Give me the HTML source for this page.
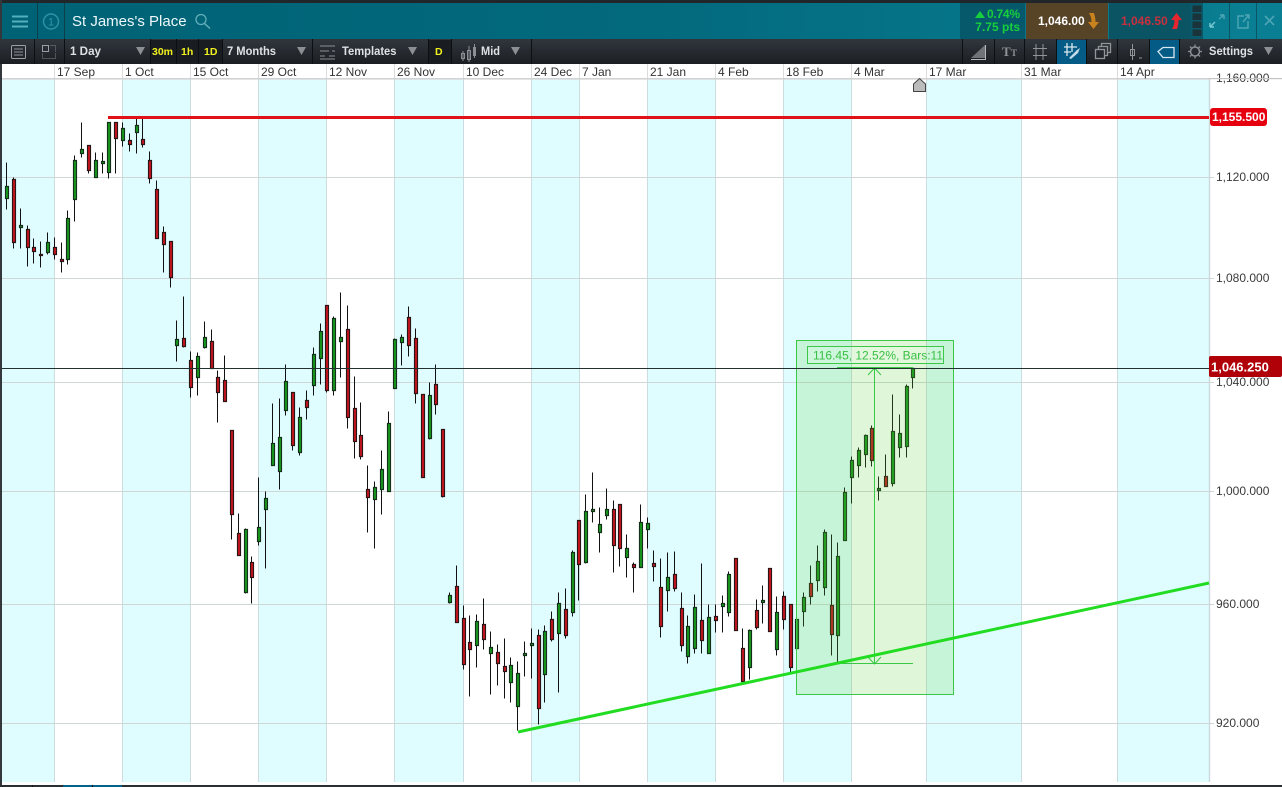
<!DOCTYPE html>
<html><head><meta charset="utf-8"><title>St James's Place</title>
<style>
html,body{margin:0;padding:0;background:#fff;width:1282px;height:787px;overflow:hidden}
svg{display:block;font-family:"Liberation Sans",sans-serif}
</style></head><body>
<svg width="1282" height="787" viewBox="0 0 1282 787" xmlns="http://www.w3.org/2000/svg">
<defs>
<linearGradient id="hd" x1="0" y1="0" x2="1" y2="0"><stop offset="0" stop-color="#006275"/><stop offset=".5" stop-color="#03697d"/><stop offset="1" stop-color="#0a7f93"/></linearGradient>
<linearGradient id="tb" x1="0" y1="0" x2="0" y2="1"><stop offset="0" stop-color="#31363c"/><stop offset="1" stop-color="#1b1f24"/></linearGradient>
</defs>
<rect width="1282" height="787" fill="#fff"/>
<!-- stripes -->
<g fill="#dffdff">
<rect x="2" y="79" width="52" height="703"/><rect x="122" y="79" width="68" height="703"/><rect x="258" y="79" width="68" height="703"/><rect x="394" y="79" width="69" height="703"/><rect x="531" y="79" width="48" height="703"/><rect x="647" y="79" width="68" height="703"/><rect x="783" y="79" width="68" height="703"/><rect x="926" y="79" width="95" height="703"/><rect x="1117" y="79" width="92" height="703"/>
</g>
<!-- vertical grid -->
<path d="M54.5 64V782M122.5 64V782M190.5 64V782M258.5 64V782M326.5 64V782M394.5 64V782M463.5 64V782M531.5 64V782M579.5 64V782M647.5 64V782M715.5 64V782M783.5 64V782M851.5 64V782M926.5 64V782M1021.5 64V782M1117.5 64V782" stroke="#ccdcdf" fill="none"/>
<path d="M1209.5 79V782" stroke="#ccd8da" stroke-width="1.4" fill="none"/>
<!-- horizontal grid -->
<path d="M2 177.5H1214M2 278.5H1214M2 382.5H1214M2 491.5H1214M2 604.5H1214M2 723.5H1214" stroke="#cfd6d6" fill="none"/>
<!-- axis labels -->
<g font-size="12" fill="#3a3a3a">
<text x="1216" y="181">1,120.000</text><text x="1216" y="282">1,080.000</text><text x="1216" y="386">1,040.000</text><text x="1216" y="495">1,000.000</text><text x="1216" y="608">960.000</text><text x="1216" y="727">920.000</text>
</g>
<rect x="0" y="64" width="1282" height="14" fill="#fff"/>
<path d="M54.5 64V78M122.5 64V78M190.5 64V78M258.5 64V78M326.5 64V78M394.5 64V78M463.5 64V78M531.5 64V78M579.5 64V78M647.5 64V78M715.5 64V78M783.5 64V78M851.5 64V78M926.5 64V78M1021.5 64V78M1117.5 64V78" stroke="#dcdcdc" fill="none"/>
<text x="1216" y="82" font-size="12" fill="#3a3a3a">1,160.000</text>
<rect x="0" y="78" width="1209" height="1.6" fill="#d2d2d2"/>
<rect x="1209" y="78" width="73" height="1.2" fill="#c4c4c4"/>
<g font-size="12" fill="#333">
<text x="57" y="76">17 Sep</text><text x="125" y="76">1 Oct</text><text x="193" y="76">15 Oct</text><text x="261" y="76">29 Oct</text><text x="329" y="76">12 Nov</text><text x="397" y="76">26 Nov</text><text x="466" y="76">10 Dec</text><text x="534" y="76">24 Dec</text><text x="582" y="76">7 Jan</text><text x="650" y="76">21 Jan</text><text x="718" y="76">4 Feb</text><text x="786" y="76">18 Feb</text><text x="854" y="76">4 Mar</text><text x="929" y="76">17 Mar</text><text x="1024" y="76">31 Mar</text><text x="1120" y="76">14 Apr</text>
</g>
<!-- candles -->
<g transform="translate(-.5,.5)">
<path fill="none" stroke="#111" stroke-width="1" d="M7 162V209M14 177V248M21 208V248M28 225V266M34 238V263M41 241V267M48 232V254M55 237V259M62 242V272M68 210V264M75 155V221M82 122V157M89 145V173M96 152V177M103 152V173M109 122V178M116 122V173M123 122V146M130 133V151M137 118V153M143 118V147M150 151V183M157 180V238M164 226V272M171 241V287M177 320V361M184 296V347M191 351V397M198 352V395M205 321V348M212 329V368M218 370V422M225 355V401M232 430V539M239 513V555M246 528V593M252 556V603M259 477V545M266 491V568M273 403V465M280 398V489M286 364V415M293 392V450M300 407V455M307 390V419M314 347V395M321 323V384M327 305V392M334 316V395M341 292V377M348 305V428M355 376V458M361 402V459M368 465V532M375 481V548M382 450V514M389 411V491M395 338V388M402 334V365M409 306V356M416 328V403M423 394V477M430 382V439M436 364V414M443 429V497M450 592V603M457 565V622M464 605V669M470 615V696M477 614V667M484 598V649M491 631V694M498 644V685M505 638V698M511 657V702M518 661V730M525 641V676M532 628V678M539 629V724M545 625V702M552 611V641M559 592V692M566 588V638M573 550V616M579 520V600M586 494V563M593 472V522M600 507V552M607 488V519M614 500V572M620 504V566M627 534V577M634 562V592M641 504V567M648 517V548M654 550V581M661 558V637M668 552V611M675 551V591M682 592V651M688 615V663M695 594V653M702 563V653M709 604V653M716 604V632M723 595V632M729 571V616M736 558V630M743 628V682M750 629V679M757 599V629M763 585V623M770 568V631M777 596V655M784 591V629M791 604V672M797 619V648M804 592V626M811 565V604M818 545V591M825 529V595M832 534V655M838 542V662M845 487V540M852 456V503M859 447V477M866 434V467M872 425V466M879 476V500M886 454V486M893 394V486M900 414V457M907 384V457M913 367V388"/>
<path fill="#169a1c" stroke="#14301a" stroke-width="1.15" d="M6 186h3V198h-3zM20 225h3V227h-3zM47 242h3V252h-3zM67 218h3V259h-3zM74 160h3V199h-3zM81 149h3V153h-3zM95 160h3V177h-3zM102 161h3V163h-3zM108 122h3V172h-3zM122 128h3V140h-3zM136 125h3V132h-3zM176 339h3V345h-3zM197 356h3V377h-3zM204 337h3V347h-3zM245 529h3V592h-3zM258 527h3V541h-3zM265 498h3V509h-3zM272 443h3V465h-3zM279 437h3V471h-3zM285 381h3V410h-3zM299 417h3V452h-3zM313 354h3V385h-3zM320 331h3V358h-3zM333 318h3V390h-3zM340 337h3V341h-3zM374 487h3V499h-3zM381 469h3V489h-3zM388 423h3V491h-3zM394 339h3V388h-3zM401 337h3V342h-3zM429 395h3V438h-3zM449 595h3V602h-3zM476 621h3V645h-3zM490 647h3V653h-3zM510 665h3V682h-3zM517 673h3V706h-3zM524 653h3V655h-3zM531 643h3V645h-3zM544 631h3V674h-3zM558 603h3V633h-3zM572 552h3V612h-3zM585 511h3V562h-3zM592 509h3V511h-3zM599 524h3V532h-3zM606 509h3V515h-3zM626 548h3V557h-3zM640 522h3V567h-3zM647 523h3V529h-3zM667 577h3V590h-3zM687 626h3V656h-3zM694 607h3V648h-3zM708 617h3V653h-3zM722 603h3V606h-3zM728 574h3V612h-3zM749 630h3V667h-3zM762 600h3V602h-3zM776 612h3V649h-3zM796 619h3V648h-3zM803 597h3V611h-3zM817 561h3V580h-3zM824 532h3V587h-3zM837 556h3V635h-3zM844 492h3V540h-3zM851 460h3V477h-3zM858 450h3V465h-3zM865 435h3V454h-3zM878 488h3V490h-3zM892 431h3V483h-3zM899 433h3V447h-3zM906 386h3V446h-3zM912 368h3V377h-3z"/>
<path fill="#c8141e" stroke="#2a1416" stroke-width="1.15" d="M13 179h3V242h-3zM27 229h3V247h-3zM33 247h3V251h-3zM40 254h3V255h-3zM54 247h3V254h-3zM61 259h3V261h-3zM88 145h3V170h-3zM115 122h3V138h-3zM129 140h3V144h-3zM142 139h3V144h-3zM149 160h3V178h-3zM156 189h3V238h-3zM163 232h3V244h-3zM170 241h3V277h-3zM183 338h3V346h-3zM190 360h3V387h-3zM211 341h3V368h-3zM217 377h3V392h-3zM224 380h3V401h-3zM231 430h3V514h-3zM238 533h3V555h-3zM251 562h3V577h-3zM292 392h3V445h-3zM306 400h3V407h-3zM326 305h3V390h-3zM347 329h3V417h-3zM354 408h3V441h-3zM360 435h3V456h-3zM367 489h3V497h-3zM408 317h3V345h-3zM415 338h3V393h-3zM422 394h3V477h-3zM435 384h3V404h-3zM442 429h3V496h-3zM456 586h3V622h-3zM463 618h3V664h-3zM469 642h3V649h-3zM483 624h3V639h-3zM497 652h3V663h-3zM504 666h3V671h-3zM538 635h3V708h-3zM551 619h3V639h-3zM565 609h3V635h-3zM578 520h3V564h-3zM613 509h3V545h-3zM619 504h3V548h-3zM633 564h3V567h-3zM653 563h3V566h-3zM660 587h3V626h-3zM674 574h3V588h-3zM681 608h3V645h-3zM701 620h3V640h-3zM715 616h3V620h-3zM735 558h3V630h-3zM742 648h3V681h-3zM756 610h3V627h-3zM769 568h3V631h-3zM783 596h3V619h-3zM790 604h3V667h-3zM810 583h3V596h-3zM831 605h3V634h-3zM871 428h3V460h-3zM885 476h3V486h-3z"/>
</g>
<!-- measure box -->
<rect x="796.5" y="340.5" width="157" height="354" fill="#64d23c" fill-opacity=".2" stroke="#3ac846"/>
<path d="M874.5 369V664M837 367.5H913M837 663.5H913M868 375L874.5 368L881 375M868 657L874.5 664L881 657" stroke="#3ac846" fill="none"/>
<rect x="807.5" y="346.5" width="136" height="17" fill="#e6fbe6" fill-opacity=".25" stroke="#3ac846"/>
<text x="813" y="359.500" font-size="12" fill="#38c044" textLength="130" lengthAdjust="spacing">116.45, 12.52%, Bars:11</text>
<!-- lines -->
<path d="M0 368.500H1209" stroke="#22302f" stroke-width="1"/>
<path d="M108 117.500H1209" stroke="#e01218" stroke-width="3"/>
<path d="M518 732L1209 583" stroke="#22dc22" stroke-width="3" fill="none"/>
<path d="M913.500 91.500V84L919.500 78.500L925.500 84V91.500Z" fill="#bcbcbc" stroke="#444"/>
<!-- price tags -->
<rect x="1210" y="108" width="57" height="18" rx="3" fill="#e6000f"/>
<text x="1212" y="121" font-size="12" font-weight="700" fill="#fff">1,155.500</text>
<rect x="1209" y="356" width="73" height="21" rx="2" fill="#b00008"/>
<text x="1211" y="371.500" font-size="13" font-weight="700" fill="#fff">1,046.250</text>
<!-- header -->
<rect x="0" y="0" width="1282" height="3" fill="#20262a"/>
<rect x="0" y="3" width="1282" height="36" fill="url(#hd)"/>
<rect x="0" y="0" width="2" height="787" fill="#33383c"/>
<rect x="0" y="39" width="1282" height="25" fill="url(#tb)"/>
<path d="M37.500 3V39M64.500 3V39" stroke="#0c3f4c"/>
<path d="M12 16.500H28M12 21.500H28M12 26.500H28" stroke="#54b0bd" stroke-width="2"/>
<circle cx="51" cy="21.500" r="7.500" fill="none" stroke="#2f93a6" stroke-width="1.400"/>
<text x="51" y="25.500" font-size="11" fill="#2f93a6" text-anchor="middle">1</text>
<text x="72" y="26" font-size="15" fill="#eef8fa">St James's Place</text>
<circle cx="201" cy="19.500" r="5" fill="none" stroke="#63aebb" stroke-width="1.300"/>
<path d="M204.500 23.500L210 28.500" stroke="#63aebb" stroke-width="1.500"/>
<!-- quote -->
<rect x="960" y="3" width="65" height="36" fill="#05596a"/>
<path d="M975 18L980 11L985 18Z" fill="#17cf3c"/>
<text x="1020" y="18" font-size="12" font-weight="700" fill="#17cf3c" text-anchor="end" textLength="33">0.74%</text>
<text x="1020" y="31" font-size="12" font-weight="700" fill="#17cf3c" text-anchor="end">7.75 pts</text>
<rect x="1026" y="3" width="82" height="36" fill="#574326"/>
<text x="1038" y="25" font-size="12" font-weight="700" fill="#fff">1,046.00</text>
<path d="M1089 13L1094 13Q1095.500 18 1095.500 22L1099 22L1093.500 29L1088 22L1091.500 22Q1091.500 17 1089 13Z" fill="#c9831e"/>
<rect x="1109" y="3" width="81" height="36" fill="#0a5464"/>
<text x="1121" y="25" font-size="12" font-weight="700" fill="#c9303e">1,046.50</text>
<path d="M1172 29L1177 29Q1178.500 25 1178.500 20L1182 20L1176.500 13L1171 20L1174.500 20Q1174.500 25 1172 29Z" fill="#e6252f"/>
<rect x="1190" y="3" width="13" height="36" fill="#08586a"/>
<g fill="#1b343c" stroke="#0a5a6c"><rect x="1192" y="5" width="10" height="7.500"/><rect x="1192" y="13" width="10" height="7.500"/><rect x="1192" y="21" width="10" height="7.500"/><rect x="1192" y="29" width="10" height="7.500"/></g>
<path d="M1229.500 3V39M1256.500 3V39" stroke="#0a5566"/>
<path d="M1210 27L1215 22M1210 27V23M1210 27H1214" stroke="#7ac9d4" stroke-width="1.400" fill="none"/>
<path d="M1224 15L1219 19M1224 15V19M1224 15H1220" stroke="#4ea6b5" stroke-width="1.400" fill="none"/>
<path d="M1248 21V28H1238V16H1244M1243 22L1249 15M1245 15H1249V19" stroke="#4ea6b5" stroke-width="1.400" fill="none"/>
<path d="M1265 16L1274 25M1274 16L1265 25" stroke="#4ea6b5" stroke-width="1.600"/>
<!-- toolbar -->
<rect x="150" y="40" width="72" height="23" fill="#191c20"/>
<rect x="428" y="40" width="23" height="23" fill="#191c20"/>
<rect x="1056" y="40" width="30" height="24" fill="#045b86"/>
<rect x="1149" y="40" width="30" height="24" fill="#045b86"/>
<path d="M34.500 39V64M64.500 39V64M150.500 39V64M176.500 39V64M198.500 39V64M222.500 39V64M312.500 39V64M428.500 39V64M451.500 39V64M531.500 39V64M962.500 39V64M994.500 39V64M1024.500 39V64M1056.500 39V64M1086.500 39V64M1117.500 39V64M1149.500 39V64M1179.500 39V64" stroke="#0d1013"/>
<rect x="11.500" y="45.500" width="14" height="13" rx="1" fill="none" stroke="#9aa0a5"/>
<path d="M14 49H23M14 52H23M14 55H23" stroke="#8d9398"/>
<path d="M42.500 45.500H48.500V51.500H42.500Z" fill="none" stroke="#9aa0a5"/>
<path d="M50.500 45.500H55.500V51.500M42.500 53.500V58.500H55.500V53.500" fill="none" stroke="#7d8388" stroke-dasharray="1 1"/>
<g font-size="12" font-weight="700" fill="#dfe2e4">
<text x="70" y="55" textLength="31" lengthAdjust="spacingAndGlyphs">1 Day</text><text x="227" y="55" textLength="49" lengthAdjust="spacingAndGlyphs">7 Months</text><text x="342" y="55" textLength="54.500" lengthAdjust="spacingAndGlyphs">Templates</text><text x="481" y="55" textLength="19" lengthAdjust="spacingAndGlyphs">Mid</text><text x="1209" y="55" textLength="44" lengthAdjust="spacingAndGlyphs">Settings</text>
</g>
<g fill="#8b9095"><path d="M136 47H145L140.500 55Z"/><path d="M297 47H306L301.500 55Z"/><path d="M408 47H417L412.500 55Z"/><path d="M511 47H520L515.500 55Z"/><path d="M1264 47H1273L1268.500 55Z"/></g>
<g font-size="10.500" font-weight="700" fill="#f2f21e">
<text x="152" y="55">30m</text><text x="181" y="55">1h</text><text x="204" y="55">1D</text><text x="435" y="55">D</text>
</g>
<path d="M320 46H335M320 51H329M332 51H335M320 56H325M329 56H335M320 59H335" stroke="#8b9095" fill="none"/>
<path d="M461.500 53.500H464.500V58.500H461.500ZM467.500 50.500H470.500V59.500H467.500ZM473.500 47.500H475.500V55.500H473.500Z" fill="none" stroke="#8b9095"/>
<path d="M463 51V61M469 46V62M474.500 44V58" stroke="#8b9095" fill="none"/>
<!-- right tools -->
<path d="M971 58L985 45V58Z" fill="#6f7478"/>
<path d="M971 59.500H986M985.500 45V59" stroke="#b4b8bb" fill="none"/>
<text x="1002" y="56" font-size="13" font-weight="700" fill="#8d9296" font-family="Liberation Serif,serif">T</text><text x="1011" y="56" font-size="9" font-weight="700" fill="#8d9296" font-family="Liberation Serif,serif">T</text>
<path d="M1036 44V60M1043 44V60M1033 48.500H1047M1033 55.500H1047" stroke="#8f9599" fill="none"/>
<path d="M1067 43V56M1072 43V52M1064 47H1077M1064 52H1071" stroke="#dbe8ee" stroke-width="1.300" fill="none"/>
<path d="M1069 58L1077 50L1080 48L1078 53L1071 59Z" fill="#c2dbe8"/>
<rect x="1095.500" y="49.500" width="9" height="9" fill="none" stroke="#8f9599" stroke-width="1.300"/>
<path d="M1098.500 49V46.500H1107.500V55.500H1105M1101.500 46V43.500H1110.500V52.500H1108" fill="none" stroke="#8f9599" stroke-width="1.300"/>
<path d="M1132.500 44V60M1139 58H1142" stroke="#8f9599" fill="none"/>
<rect x="1130.500" y="49.500" width="4" height="6" fill="none" stroke="#8f9599"/>
<path d="M1158 51.500L1163 47.500H1174V57.500H1163Z" fill="none" stroke="#d7e8f0" stroke-width="1.300"/>
<circle cx="1195" cy="51.500" r="4.500" fill="none" stroke="#8b9095" stroke-width="1.500"/>
<path d="M1195 44.500V47M1195 56V58.500M1188 51.500H1190.500M1199.500 51.500H1202M1190 46.500L1191.800 48.300M1198.200 54.700L1200 56.500M1200 46.500L1198.200 48.300M1191.800 54.700L1190 56.500" stroke="#8b9095" stroke-width="1.300"/>
<!-- bottom -->
<rect x="2" y="782" width="1280" height="3" fill="#fff"/>
<rect x="0" y="785" width="1282" height="2" fill="#2a2f33"/>
<rect x="63" y="785" width="59" height="2" fill="#05608a"/>
<path d="M32.500 785V787M92.500 785V787" stroke="#111"/>
</svg>
</body></html>
